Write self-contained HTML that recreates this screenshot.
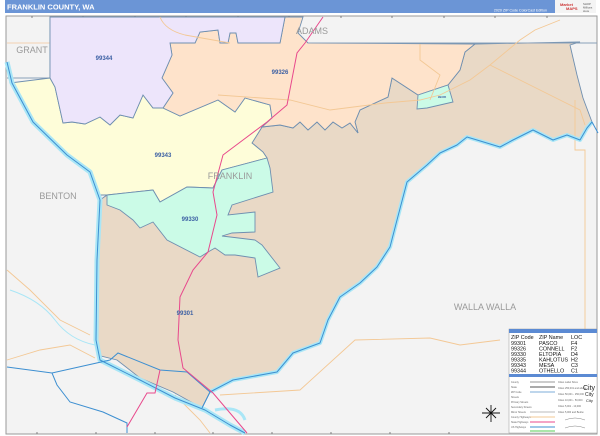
<!DOCTYPE html>
<html><head><meta charset="utf-8"><style>
html,body{margin:0;padding:0;background:#fff;width:600px;height:436px;overflow:hidden}
svg{display:block}
text{font-family:"Liberation Sans",sans-serif}
</style></head><body>
<svg width="600" height="436" viewBox="0 0 600 436" xmlns="http://www.w3.org/2000/svg">
<rect x="0" y="0" width="600" height="436" fill="#fff"/>
<rect x="5" y="0" width="550" height="13" fill="#6b95d6"/>
<text x="7" y="9.5" font-size="7.5" font-weight="bold" fill="#fff">FRANKLIN COUNTY, WA</text>
<text x="547" y="11.5" font-size="3.6" fill="#fff" text-anchor="end">2020 ZIP Code ColorCast Edition</text>
<rect x="555" y="0" width="41" height="13" fill="#f4f4f4"/>
<text x="560" y="6" font-size="4" fill="#c33" font-weight="bold">Market</text>
<text x="566" y="10" font-size="4" fill="#c33" font-weight="bold">MAPS</text>
<text x="583" y="5" font-size="2.8" fill="#555">SHOP</text>
<text x="583" y="8.5" font-size="2.8" fill="#555">Millions</text>
<text x="583" y="12" font-size="2.8" fill="#555">store</text>
<rect x="6" y="16" width="591" height="418" fill="#f3f3f3" stroke="#999" stroke-width="1"/>
<g stroke="#666" stroke-width="0.8">
<line x1="32" y1="16" x2="32" y2="18"/><line x1="83" y1="16" x2="83" y2="18"/><line x1="135" y1="16" x2="135" y2="18"/><line x1="186" y1="16" x2="186" y2="18"/><line x1="238" y1="16" x2="238" y2="18"/><line x1="289" y1="16" x2="289" y2="18"/><line x1="341" y1="16" x2="341" y2="18"/><line x1="392" y1="16" x2="392" y2="18"/><line x1="444" y1="16" x2="444" y2="18"/><line x1="495" y1="16" x2="495" y2="18"/><line x1="547" y1="16" x2="547" y2="18"/>
<line x1="37" y1="432" x2="37" y2="434"/><line x1="96" y1="432" x2="96" y2="434"/><line x1="155" y1="432" x2="155" y2="434"/><line x1="213" y1="432" x2="213" y2="434"/><line x1="272" y1="432" x2="272" y2="434"/><line x1="331" y1="432" x2="331" y2="434"/><line x1="390" y1="432" x2="390" y2="434"/><line x1="449" y1="432" x2="449" y2="434"/>
</g>
<polyline points="7,78 50,78 50,17" fill="none" stroke="#8aa0b8" stroke-width="1"/>
<line x1="7" y1="43" x2="170" y2="43" stroke="#f3c79a" stroke-width="0.8"/>
<polygon fill="#e9d9c6" stroke="#6f8fb0" stroke-width="0.9" points="475,44 580,42 570,45 577,75 583,98 592,122 587,128 580,140 567,135 553,140 533,130 513,140 500,147 477,140 467,137 457,145 440,153 427,165 407,182 397,215 390,247 377,267 360,283 340,297 328,320 320,343 293,353 277,372 233,380 210,392 202,408 173,392 140,378 117,360 97,355 96,300 98,250 100,200 107,195 213,188 222,170 267,158 263,152 252,143 262,127 280,125 293,128 300,122 308,130 317,122 325,130 333,122 342,128 350,123 358,133 355,122 360,110 388,97 392,78 418,95 448,85 460,70 465,52"/>
<polygon fill="#fefdd9" stroke="#6f8fb0" stroke-width="0.9" points="10,83 50,78 55,87 63,123 72,122 85,124 100,117 110,125 120,115 133,118 143,95 153,108 163,108 180,116 218,100 235,112 245,98 270,105 272,118 262,127 252,143 263,152 267,158 222,170 213,188 187,187 160,202 153,190 107,195 100,195 90,172 67,155 33,122"/>
<polygon fill="#fee3cb" stroke="#6f8fb0" stroke-width="0.9" points="170,43 195,43 200,32 218,30 220,43 228,43 230,33 236,33 238,43 280,43 285,17 303,17 298,33 308,43 475,44 465,52 460,70 448,85 418,95 392,78 388,97 360,110 355,122 358,133 350,123 342,128 333,122 325,130 317,122 308,130 300,122 293,128 280,125 262,127 272,118 270,105 245,98 235,112 218,100 180,116 163,108 173,93 162,78 172,55"/>
<polygon fill="#ede5fb" stroke="#6f8fb0" stroke-width="0.9" points="50,17 285,17 280,43 238,43 236,33 230,33 228,43 220,43 218,30 200,32 195,43 170,43 172,55 162,78 173,93 163,108 153,108 143,95 133,118 120,115 110,125 100,117 85,124 72,122 63,123 55,87 50,78"/>
<line x1="308" y1="43" x2="597" y2="43" stroke="#8aa0b8" stroke-width="1"/>
<polygon fill="#cbfbe7" stroke="#6f8fb0" stroke-width="0.9" points="107,195 153,190 160,202 187,187 213,188 222,170 267,158 270,168 273,192 232,205 228,215 255,212 255,232 232,233 222,236 255,240 262,245 280,268 258,277 255,258 235,255 225,255 215,248 208,252 200,257 167,240 153,222 140,228 133,220 120,210 107,205"/>
<polygon fill="#cbfbe7" stroke="#6f8fb0" stroke-width="0.9" points="418,95 448,85 453,102 427,108 417,109"/>
<g fill="none" stroke="#f3c895" stroke-width="0.9">
<path d="M160,17 Q165,30 185,35 L230,43"/>
<path d="M218,95 L290,100 L330,110 L385,103 L420,100 L440,95 L470,80 L490,65 L520,40 L535,30 L560,20"/>
<path d="M420,44 L420,60 L440,75 L430,100"/>
<path d="M490,65 L520,80 L560,100 L580,110 L585,125"/>
<path d="M7,270 L30,290 L60,320 L90,335"/>
<path d="M7,360 L40,350 L70,345 L95,358"/>
<path d="M220,395 L300,390 L355,340 L430,338 L460,345 L500,340"/>
<path d="M175,395 L200,420 L210,433"/>
<path d="M575,100 L575,150 L585,150 L585,433"/>
</g>
<g fill="none" stroke-linejoin="round">
<path d="M7,62 L12,83 L33,122 L67,155 L90,172 L100,200 L97,260 L96,340 L100,360 L140,380 L175,398 L205,410 L230,425 L245,433" stroke="#a9e6f6" stroke-width="5"/>
<path d="M7,62 L12,83 L33,122 L67,155 L90,172 L100,200 L97,260 L96,340 L100,360 L140,380 L175,398 L205,410 L230,425 L245,433" stroke="#3d8fd1" stroke-width="1"/>
<path d="M210,392 L233,380 L277,372 L293,353 L320,343 L328,320 L340,297 L360,283 L377,267 L390,247 L397,220 L407,182 L427,165 L440,153 L457,145 L467,137 L477,140 L500,147 L513,140 L533,130 L553,140 L567,135 L580,140 L587,128 L592,122" stroke="#a9e6f6" stroke-width="4"/>
<path d="M210,392 L233,380 L277,372 L293,353 L320,343 L328,320 L340,297 L360,283 L377,267 L390,247 L397,220 L407,182 L427,165 L440,153 L457,145 L467,137 L477,140 L500,147 L513,140 L533,130 L553,140 L567,135 L580,140 L587,128 L592,122 L598,133" stroke="#3d8fd1" stroke-width="1"/>
<path d="M10,290 Q40,300 55,320 Q70,340 95,345" stroke="#a9e6f6" stroke-width="1"/>
<path d="M215,410 Q240,405 245,420" stroke="#a9e6f6" stroke-width="3"/>
</g>
<g fill="none" stroke-width="1">
<path d="M7,367 L52,373 L110,360 L118,353 L160,370 L187,372 L210,392 L202,408" stroke="#3d8fd1"/>
<path d="M52,373 L57,385 L70,402 L103,412 L127,423 L127,433" stroke="#3d8fd1"/>
<path d="M323,17 L305,43 L297,53 L287,105 L267,122 L223,155 L213,192 L217,215 L208,252 L193,270 L180,297 L178,340 L183,368 L213,393 L247,433" stroke="#e8498c"/>
<path d="M160,370 L155,393 L147,393 L127,427" stroke="#e8498c"/>
</g>
<g fill="#9a9a9a" font-size="9" text-anchor="middle">
<text x="32" y="53">GRANT</text>
<text x="312" y="34">ADAMS</text>
<text x="230" y="179">FRANKLIN</text>
<text x="58" y="199">BENTON</text>
<text x="485" y="310">WALLA WALLA</text>
</g>
<g fill="#3b5fa3" font-size="6" font-weight="bold" text-anchor="middle">
<text x="104" y="60">99344</text>
<text x="280" y="74">99326</text>
<text x="163" y="157">99343</text>
<text x="190" y="221">99330</text>
<text x="185" y="315">99301</text>
<text x="442" y="98" font-size="3">99335</text>
</g>
<rect x="509" y="329" width="88" height="104" fill="#fff" stroke="#999" stroke-width="0.5"/>
<rect x="509" y="329" width="88" height="4" fill="#5b8ad3"/>
<g font-size="5.4" fill="#111">
<text x="511" y="339">ZIP Code</text><text x="539" y="339">ZIP Name</text><text x="571" y="339">LOC</text>
<text x="511" y="345">99301</text><text x="539" y="345">PASCO</text><text x="571" y="345">F4</text>
<text x="511" y="350.5">99326</text><text x="539" y="350.5">CONNELL</text><text x="571" y="350.5">F2</text>
<text x="511" y="356">99330</text><text x="539" y="356">ELTOPIA</text><text x="571" y="356">D4</text>
<text x="511" y="361.5">99335</text><text x="539" y="361.5">KAHLOTUS</text><text x="571" y="361.5">H2</text>
<text x="511" y="367">99343</text><text x="539" y="367">MESA</text><text x="571" y="367">C3</text>
<text x="511" y="372.5">99344</text><text x="539" y="372.5">OTHELLO</text><text x="571" y="372.5">C1</text>
</g>
<rect x="509" y="374" width="88" height="3" fill="#5b8ad3"/>
<g stroke-width="1" fill="none">
<line x1="530" y1="382" x2="555" y2="382" stroke="#999"/>
<line x1="530" y1="387" x2="555" y2="387" stroke="#555"/>
<line x1="530" y1="392" x2="555" y2="392" stroke="#a9c8e6" stroke-width="1.5"/>
<line x1="530" y1="412" x2="555" y2="412" stroke="#bbb"/>
<line x1="530" y1="417" x2="555" y2="417" stroke="#f3c895"/>
<line x1="530" y1="422" x2="555" y2="422" stroke="#e8498c"/>
<line x1="530" y1="427" x2="555" y2="427" stroke="#3d8fd1"/>
<line x1="530" y1="431" x2="555" y2="431" stroke="#5c5"/>
</g>
<g font-size="2.5" fill="#666">
<text x="511" y="383">County</text><text x="511" y="388">State</text><text x="511" y="393">ZIP Code</text><text x="511" y="398">Streets</text><text x="511" y="403">Primary Streets</text><text x="511" y="408">Secondary Streets</text><text x="511" y="413">Minor Streets</text><text x="511" y="418">County Highways</text><text x="511" y="423">State Highways</text><text x="511" y="428">US Highways</text>
<text x="558" y="383">Cities Label Sizes</text><text x="558" y="389">Cities 250,001 and above</text><text x="558" y="395">Cities 50,001 - 250,000</text><text x="558" y="401">Cities 10,001 - 50,000</text><text x="558" y="407">Cities 5,001 - 10,000</text><text x="558" y="413">Cities 5,000 and Below</text>
</g>
<g font-size="5" fill="#222"><text x="583" y="390" font-size="7">City</text><text x="585" y="396">City</text><text x="586" y="402" font-size="4">City</text></g>
<path d="M565,420 Q575,416 585,420 M565,428 Q575,424 585,428" fill="none" stroke="#666" stroke-width="0.4"/>
<g stroke="#111" stroke-width="0.9">
<line x1="491" y1="405" x2="491" y2="422"/><line x1="482" y1="413" x2="500" y2="413"/>
<line x1="486" y1="408" x2="496" y2="418"/><line x1="496" y1="408" x2="486" y2="418"/>
</g>
</svg>
</body></html>
